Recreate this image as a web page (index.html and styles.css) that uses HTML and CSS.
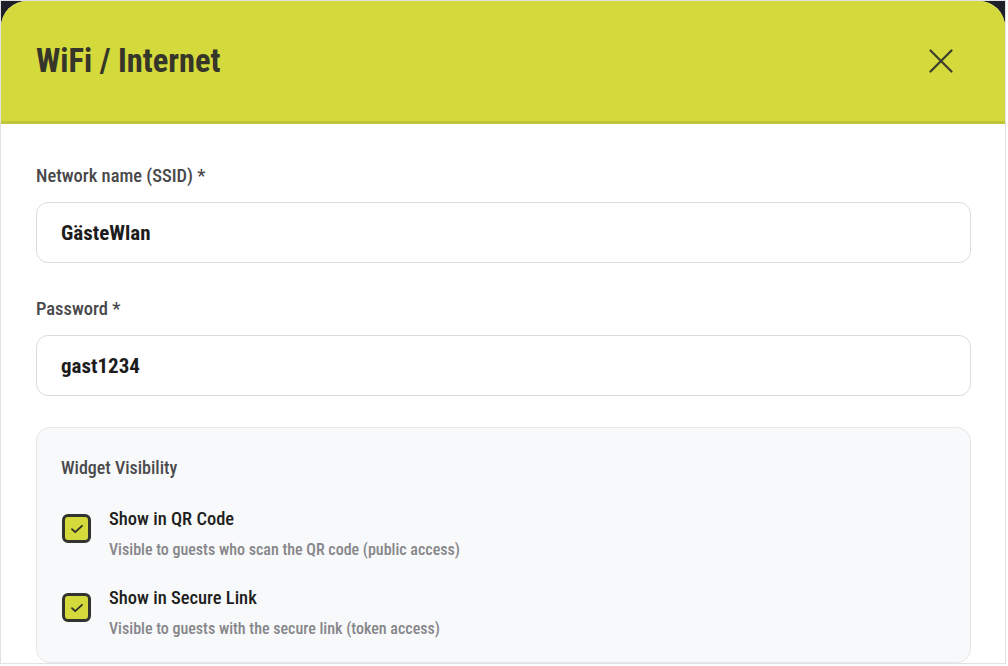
FILE: index.html
```html
<!DOCTYPE html>
<html lang="en">
<head>
<meta charset="utf-8">
<title>WiFi / Internet</title>
<link rel="stylesheet" href="styles.css">
</head>
<body>
<div class="frame">
  <div class="modal">
    <header class="modal-header">
      <h1 class="title">WiFi / Internet</h1>
      <button class="close" aria-label="Close">
        <svg width="24" height="24" viewBox="0 0 24 24" fill="none" stroke="#3b3b2e" stroke-width="2.2" stroke-linecap="round"><path d="M1.5 1.5 L22.5 22.5 M22.5 1.5 L1.5 22.5"/></svg>
      </button>
    </header>
    <div class="modal-body">
      <div class="field">
        <label class="label">Network name (SSID) *</label>
        <div class="input">GästeWlan</div>
      </div>
      <div class="field">
        <label class="label">Password *</label>
        <div class="input">gast1234</div>
      </div>
      <section class="panel">
        <h2 class="panel-title">Widget Visibility</h2>
        <div class="option">
          <span class="check"><svg width="14" height="10" viewBox="0 0 14 10" fill="none" stroke="#2f2f2a" stroke-width="1.8" stroke-linecap="round" stroke-linejoin="round"><path d="M2 5.2 L5.2 8.2 L12 1.8"/></svg></span>
          <div class="option-text">
            <div class="option-title">Show in QR Code</div>
            <div class="option-desc">Visible to guests who scan the QR code (public access)</div>
          </div>
        </div>
        <div class="option">
          <span class="check"><svg width="14" height="10" viewBox="0 0 14 10" fill="none" stroke="#2f2f2a" stroke-width="1.8" stroke-linecap="round" stroke-linejoin="round"><path d="M2 5.2 L5.2 8.2 L12 1.8"/></svg></span>
          <div class="option-text">
            <div class="option-title">Show in Secure Link</div>
            <div class="option-desc">Visible to guests with the secure link (token access)</div>
          </div>
        </div>
      </section>
    </div>
  </div>
</div>
</body>
</html>
```
FILE: styles.css
```css
* { box-sizing: border-box; }
html, body { margin: 0; padding: 0; background: #ffffff; }
body {
  font-family: "Roboto Condensed", "Roboto", sans-serif;
  font-stretch: condensed;
  width: 1008px;
  height: 666px;
  overflow: hidden;
}
.frame {
  width: 1006px;
  height: 664px;
  border: 1px solid #e2e2e2;
  background: #1e1f29;
  overflow: hidden;
}
.modal {
  height: 100%;
  background: #ffffff;
  border-radius: 26px 26px 0 0;
  overflow: hidden;
}
.modal-header {
  height: 123px;
  background: #d4d93c;
  border-bottom: 3px solid #c0c537;
  display: flex;
  align-items: center;
  justify-content: space-between;
  padding: 0 52px 0 35px;
}
.title {
  margin: 0;
  font-size: 32.5px;
  font-weight: 700;
  color: #35352a;
}
.close {
  background: none;
  border: none;
  padding: 0;
  width: 24px;
  height: 24px;
  display: flex;
}
.modal-body {
  padding: 40px 34px 0 35px;
  display: flex;
  flex-direction: column;
}
.field { display: flex; flex-direction: column; gap: 14px; margin-bottom: 34px; }
.field + .field { margin-bottom: 31px; }
.label {
  font-size: 18.5px;
  line-height: 24px;
  font-weight: 500;
  color: #48484a;
}
.input {
  height: 61px;
  border: 1px solid #dcdcdc;
  border-radius: 12px;
  padding: 0 24px;
  display: flex;
  align-items: center;
  font-size: 21px;
  font-weight: 700;
  color: #1c1c1c;
}
.panel {
  background: #f8f9fa;
  border: 1px solid #e6e7e9;
  border-radius: 14px;
  padding: 29px 24px 23px 24px;
  display: flex;
  flex-direction: column;
  gap: 26px;
}
.panel-title {
  margin: 0 0 2px;
  font-size: 18px;
  line-height: 22px;
  font-weight: 500;
  color: #4a4a4c;
}
.option { display: flex; align-items: flex-start; gap: 18px; }
.check {
  width: 29px;
  height: 29px;
  margin-top: 7px;
  margin-left: 1px;
  border: 3px solid #333330;
  border-radius: 6px;
  background: #d4d93c;
  display: flex;
  align-items: center;
  justify-content: center;
  flex: none;
}
.option-text { display: flex; flex-direction: column; gap: 8px; }
.option-title {
  font-size: 18.5px;
  line-height: 25px;
  font-weight: 500;
  color: #1e1e1e;
}
.option-desc {
  font-size: 16px;
  line-height: 20px;
  font-weight: 500;
  color: #86868a;
}
```
